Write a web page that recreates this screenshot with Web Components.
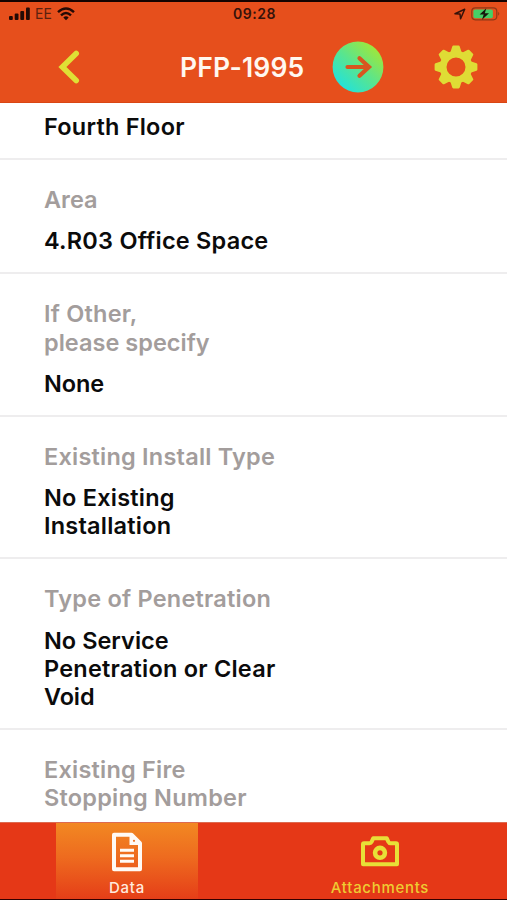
<!DOCTYPE html>
<html lang="en">
<head>
<meta charset="utf-8">
<title>PFP-1995</title>
<style>
html,body{margin:0;height:100%;overflow:hidden;background:#fff;font-family:Inter,"Liberation Sans",sans-serif}
.l{display:block;white-space:nowrap;letter-spacing:.22px}
.l.t{letter-spacing:-.1px}
.l.m{letter-spacing:.02px}
</style>
</head>
<body>
<app-screen>
  <status-bar slot="top"></status-bar>
  <nav-header slot="top">PFP-1995</nav-header>
  <data-row first><span class="l">Fourth Floor</span></data-row>
  <data-row><span slot="label" class="l m">Area</span><span class="l">4.R03 Office Space</span></data-row>
  <data-row><span slot="label" class="l">If Other,</span><span slot="label" class="l m">please specify</span><span class="l t">None</span></data-row>
  <data-row><span slot="label" class="l">Existing Install Type</span><span class="l">No Existing</span><span class="l">Installation</span></data-row>
  <data-row><span slot="label" class="l">Type of Penetration</span><span class="l m">No Service</span><span class="l">Penetration or Clear</span><span class="l t">Void</span></data-row>
  <data-row><span slot="label" class="l">Existing Fire</span><span slot="label" class="l">Stopping Number</span></data-row>
  <tab-bar slot="bottom">
    <tab-item active>
      <svg slot="icon" width="32" height="40" viewBox="0 0 32 40"><path d="M3 2.7H20.5L29 11.2V37.3H3Z" fill="none" stroke="#fffaf5" stroke-width="4" stroke-linejoin="round"/><path d="M18.5 3V13H29L20.5 3Z" fill="#fffaf5"/><circle cx="23" cy="8.8" r="1.1" fill="#ed7423"/><path d="M9 18.3H23M9 23.7H23M9 29.3H23" stroke="#fffaf5" stroke-width="3"/></svg>
      Data
    </tab-item>
    <tab-item>
      <svg slot="icon" width="40" height="40" viewBox="0 0 40 40"><path d="M3 12.2Q3 11.2 4 11.2H9.5Q11 11.2 11.7 9.7L13.3 6.2H26.7L28.3 9.7Q29 11.2 30.5 11.2H36Q37 11.2 37 12.2V32.3H3Z" fill="none" stroke="#e8df37" stroke-width="4" stroke-linejoin="round"/><circle cx="20" cy="20.8" r="4.9" fill="none" stroke="#e8df37" stroke-width="4.6"/></svg>
      Attachments
    </tab-item>
  </tab-bar>
</app-screen>
<script>
function define(name, html) {
  customElements.define(name, class extends HTMLElement {
    constructor() {
      super();
      this.attachShadow({ mode: 'open' }).innerHTML = html;
    }
  });
}

define('app-screen', `
<style>
:host{display:flex;flex-direction:column;height:100vh;box-sizing:border-box;border-bottom:1px solid #300}
main{flex:1;min-height:0;overflow:hidden}
</style>
<slot name="top"></slot><main><slot></slot></main><slot name="bottom"></slot>`);

define('status-bar', `
<style>
:host{display:grid;grid-template-columns:1fr auto 1fr;align-items:center;height:24px;box-sizing:border-box;
 border-top:2px solid #150300;background:#e64f1c;color:#35120a;padding:1px 7px 0 9px;font-size:14px}
.left,.right{display:flex;align-items:center}
.right{justify-content:flex-end;gap:5px}
.ee{margin:0 5px 0 5px;font-size:14px;color:#5b210f}
time{font-weight:600;letter-spacing:.5px}
svg{display:block}
</style>
<div class="left">
 <svg width="21" height="14" viewBox="0 0 21 14" fill="#240a05"><rect x="0" y="9" width="3.8" height="4" rx="1"/><rect x="5.7" y="6.5" width="3.8" height="6.5" rx="1"/><rect x="11.3" y="4" width="3.8" height="9" rx="1"/><rect x="17" y="0.6" width="3.8" height="12.4" rx="1"/></svg>
 <span class="ee">EE</span>
 <svg width="18" height="14" viewBox="0 0 18 14" fill="none" stroke="#240a05" stroke-width="2.4"><path d="M1 5.2Q9-2.2 17 5.2M4 8.4Q9 3.7 14 8.4"/><path d="M6.3 10.4Q9 8.2 11.7 10.4L9 13.2Z" fill="#240a05" stroke="none"/></svg>
</div>
<time>09:28</time>
<div class="right">
 <svg width="12" height="12" viewBox="0 0 12 12"><path d="M1 5.7L10.7 1.2L6.6 10.8L6 6Z" fill="none" stroke="#35120a" stroke-width="1.5" stroke-linejoin="round"/></svg>
 <svg width="29" height="14" viewBox="0 0 29 14"><rect x=".8" y=".8" width="25" height="12" rx="3.5" fill="none" stroke="#8e3917" stroke-width="1.2"/><rect x="2.4" y="2.4" width="19.5" height="8.8" rx="1.8" fill="#45cf66"/><path d="M27.2 4.8Q29.3 6.8 27.2 8.8Z" fill="#8e3917"/><path d="M15.3 1.2L8.6 7.5H12.7L11 12.8L18 6.3H13.8Z" fill="#16160c"/></svg>
</div>`);

const teeth = [0,45,90,135,180,225,270,315].map(a =>
  `<path transform="rotate(${a})" d="M-4.6-14L-2.6-20.2H2.6L4.6-14Z"/>`).join('');
define('nav-header', `
<style>
:host{display:grid;grid-template-columns:58px 122px 126px 1fr auto;align-items:center;height:78.5px;box-sizing:border-box;
 background:#e64f1c;color:#fff8f0;padding:9px 29px 0 0;border-bottom:1px solid #d94614}
.title{grid-column:3;font-size:26.5px;font-weight:600;white-space:nowrap;letter-spacing:.15px}
.back{grid-column:1/3;padding-left:57px}
.go{padding-left:26px}
svg{display:block}
</style>
<svg class="back" width="24" height="36" viewBox="0 0 24 36"><path d="M19.2 4.5L5.4 18L19.2 31.5" fill="none" stroke="#dfe035" stroke-width="5.6" stroke-linecap="round" stroke-linejoin="miter"/></svg>
<div class="title"><slot></slot></div>
<svg class="go" width="52" height="52" viewBox="0 0 52 52"><defs><linearGradient id="g" x1=".18" y1=".85" x2=".82" y2=".15"><stop offset="0" stop-color="#27e2d4"/><stop offset=".5" stop-color="#5ae58d"/><stop offset="1" stop-color="#9ae641"/></linearGradient></defs><circle cx="26" cy="26" r="25.4" fill="url(#g)"/><path d="M15.5 26H36M27.5 17.2L37 26L27.5 34.8" fill="none" stroke="#d7561f" stroke-width="4.2" stroke-linecap="round"/></svg>
<svg width="44" height="44" viewBox="-22 -22 44 44"><g fill="#dfdc35" stroke="#dfdc35" stroke-width="2.4" stroke-linejoin="round">${teeth}</g><circle r="12.9" fill="#e64f1c" stroke="#dfdc35" stroke-width="6.8"/></svg>`);

define('data-row', `
<style>
:host{display:flex;flex-direction:column;gap:13px;padding:26px 44px 17px;border-bottom:2px solid #eeedee;
 font-size:23.5px;line-height:28.15px;font-weight:600;color:#0b0b0b}
:host([first]){padding-top:10.5px;gap:0}
.label{color:#a39d9c}
</style>
<div class="label"><slot name="label"></slot></div><div><slot></slot></div>`);

define('tab-bar', `
<style>:host{display:grid;grid-template-columns:142px 1fr;height:77px;padding:0 0 0 56px;background:#e53817;border-top:1px solid #dd6a50;box-sizing:border-box}</style>
<slot></slot>`);

define('tab-item', `
<style>
:host{display:flex;flex-direction:column;align-items:center;padding-top:9px;box-sizing:border-box;color:#eecb32;font-size:15px;font-weight:500;line-height:18px;letter-spacing:.7px}
:host([active]){background:linear-gradient(#f28822,#ee6b1f 45%,#e53e18);color:#ffeade}
:host(:not([active])){margin-left:55px}
.icon{height:40px;margin-bottom:7px}
</style>
<div class="icon"><slot name="icon"></slot></div><div><slot></slot></div>`);
</script>
</body>
</html>
